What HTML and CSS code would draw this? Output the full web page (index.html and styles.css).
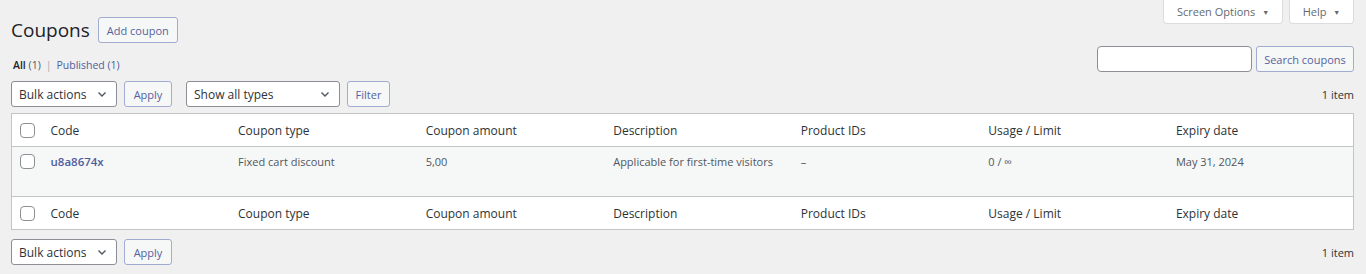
FILE: index.html
```html
<!DOCTYPE html>
<html lang="en">
<head>
    <meta charset="UTF-8">
    <meta name="viewport" content="width=device-width, initial-scale=1.0">
    <title>Coupons</title>
    <link rel="stylesheet" href="styles.css">
</head>
<body>
    <div class="page-top">
        <div class="title-row">
            <h1>Coupons</h1>
            <button class="button">Add coupon</button>
        </div>
        <div class="screen-links">
            <button class="screen-tab options">Screen Options <span class="caret">▼</span></button>
            <button class="screen-tab help">Help <span class="caret">▼</span></button>
        </div>
    </div>

    <div class="filter-row">
        <ul class="subsubsub">
            <li class="current">All <span class="count">(1)</span></li>
            <li class="sep">|</li>
            <li><a href="#">Published <span class="count">(1)</span></a></li>
        </ul>
        <div class="search-box">
            <input type="search" class="search-input">
            <button class="button search-submit">Search coupons</button>
        </div>
    </div>

    <div class="tablenav">
        <div class="actions">
            <div class="select-wrap bulk">
                <select><option>Bulk actions</option></select>
                <svg class="chevron" viewBox="0 0 12 12" width="12" height="12"><path d="M2.5 4.5 L6 8 L9.5 4.5" fill="none" stroke="#50575e" stroke-width="1.4"/></svg>
            </div>
            <button class="button apply">Apply</button>
        </div>
        <div class="actions">
            <div class="select-wrap types">
                <select><option>Show all types</option></select>
                <svg class="chevron" viewBox="0 0 12 12" width="12" height="12"><path d="M2.5 4.5 L6 8 L9.5 4.5" fill="none" stroke="#50575e" stroke-width="1.4"/></svg>
            </div>
            <button class="button filter">Filter</button>
        </div>
        <div class="displaying-num">1 item</div>
    </div>

    <table class="list-table">
        <thead>
            <tr>
                <th class="check-column"><span class="checkbox"></span></th>
                <th>Code</th>
                <th>Coupon type</th>
                <th>Coupon amount</th>
                <th>Description</th>
                <th>Product IDs</th>
                <th>Usage / Limit</th>
                <th>Expiry date</th>
            </tr>
        </thead>
        <tbody>
            <tr>
                <td class="check-column"><span class="checkbox"></span></td>
                <td><a href="#" class="row-title">u8a8674x</a></td>
                <td>Fixed cart discount</td>
                <td>5,00</td>
                <td>Applicable for first-time visitors</td>
                <td>–</td>
                <td>0 / ∞</td>
                <td>May 31, 2024</td>
            </tr>
        </tbody>
        <tfoot>
            <tr>
                <th class="check-column"><span class="checkbox"></span></th>
                <th>Code</th>
                <th>Coupon type</th>
                <th>Coupon amount</th>
                <th>Description</th>
                <th>Product IDs</th>
                <th>Usage / Limit</th>
                <th>Expiry date</th>
            </tr>
        </tfoot>
    </table>

    <div class="tablenav bottom">
        <div class="actions">
            <div class="select-wrap bulk">
                <select><option>Bulk actions</option></select>
                <svg class="chevron" viewBox="0 0 12 12" width="12" height="12"><path d="M2.5 4.5 L6 8 L9.5 4.5" fill="none" stroke="#50575e" stroke-width="1.4"/></svg>
            </div>
            <button class="button apply">Apply</button>
        </div>
        <div class="displaying-num">1 item</div>
    </div>
</body>
</html>
```

FILE: styles.css
```css
* {
    box-sizing: border-box;
}

body {
    margin: 0;
    padding: 0 12px 0 11px;
    background: #f0f0f1;
    font-family: 'Open Sans', 'Noto Sans', sans-serif;
    font-size: 12px;
    color: #2c3338;
}

a {
    color: #4f5d9c;
    text-decoration: none;
}

.page-top {
    display: flex;
    justify-content: space-between;
    align-items: flex-start;
}

.title-row {
    display: flex;
    align-items: center;
    gap: 8px;
    padding-top: 17px;
}

h1 {
    margin: 0;
    font-size: 19px;
    font-weight: 400;
    line-height: 26px;
    color: #1d2327;
}

.button {
    flex: none;
    height: 26px;
    padding: 0 8px;
    font-family: inherit;
    font-size: 11px;
    color: #5563a0;
    background: #f6f7f7;
    border: 1px solid #a2abd0;
    border-radius: 3px;
    cursor: pointer;
    white-space: nowrap;
}

.screen-links {
    display: flex;
    gap: 6px;
}

.screen-tab {
    flex: none;
    height: 24px;
    padding: 0;
    font-family: inherit;
    font-size: 11px;
    color: #646970;
    background: #fff;
    border: 1px solid #dcdcde;
    border-top: none;
    border-radius: 0 0 4px 4px;
    white-space: nowrap;
}

.screen-tab.options {
    width: 120px;
}

.screen-tab.help {
    width: 65px;
}

.caret {
    font-size: 7px;
    margin-left: 4px;
    vertical-align: 1px;
}

.filter-row {
    display: flex;
    justify-content: space-between;
    align-items: flex-start;
    margin-top: 3px;
}

.subsubsub {
    display: flex;
    gap: 5px;
    list-style: none;
    margin: 11px 0 0 2px;
    padding: 0;
    font-size: 10.5px;
    line-height: 16px;
    color: #646970;
}

.subsubsub .current {
    color: #1d2327;
    font-weight: 600;
}

.subsubsub .current .count {
    font-weight: 400;
    color: #50575e;
}

.sep {
    color: #a7aaad;
}

.search-box {
    display: flex;
    flex: none;
    gap: 4px;
}

.search-input {
    flex: none;
    width: 155px;
    height: 26px;
    border: 1px solid #8c8f94;
    border-radius: 4px;
    background: #fff;
}

.search-submit {
    width: 98px;
    padding: 0;
}

.tablenav {
    display: flex;
    align-items: center;
    gap: 14px;
    margin: 8px 0 6px;
}

.tablenav.bottom {
    margin-top: 9px;
}

.actions {
    display: flex;
    gap: 7px;
}

.select-wrap {
    position: relative;
}

.select-wrap select {
    appearance: none;
    height: 26px;
    padding: 0 24px 0 7px;
    font-family: inherit;
    font-size: 12px;
    color: #2c3338;
    background: #fff;
    border: 1px solid #8c8f94;
    border-radius: 3px;
}

.select-wrap.bulk select {
    width: 106px;
}

.select-wrap.types select {
    width: 154px;
}

.chevron {
    position: absolute;
    right: 9px;
    top: 7px;
    pointer-events: none;
}

.button.apply {
    width: 48px;
    padding: 0;
}

.button.filter {
    width: 43px;
    padding: 0;
}

.displaying-num {
    margin-left: auto;
    font-size: 11px;
    color: #2c3338;
}

.list-table {
    width: 100%;
    border-collapse: collapse;
    table-layout: fixed;
    background: #fff;
    border: 1px solid #c3c4c7;
}

.list-table th,
.list-table td {
    text-align: left;
    padding: 0 10px;
}

.list-table th {
    height: 33px;
    font-size: 12px;
    font-weight: 400;
    color: #2c3338;
}

.list-table thead tr {
    border-bottom: 1px solid #c3c4c7;
}

.list-table tfoot tr {
    border-top: 1px solid #c3c4c7;
}

.list-table tbody tr {
    background: #f6f7f7;
}

.list-table td {
    height: 50px;
    vertical-align: top;
    padding-top: 7px;
    font-size: 11px;
    color: #50575e;
}

.list-table .check-column {
    width: 29px;
    padding: 0 0 0 8px;
}

.list-table td.check-column {
    padding-top: 7px;
}

.checkbox {
    display: block;
    width: 15px;
    height: 15px;
    border: 1px solid #8c8f94;
    border-radius: 4px;
    background: #fff;
}

.row-title {
    font-size: 11.5px;
    font-weight: 600;
}
```
